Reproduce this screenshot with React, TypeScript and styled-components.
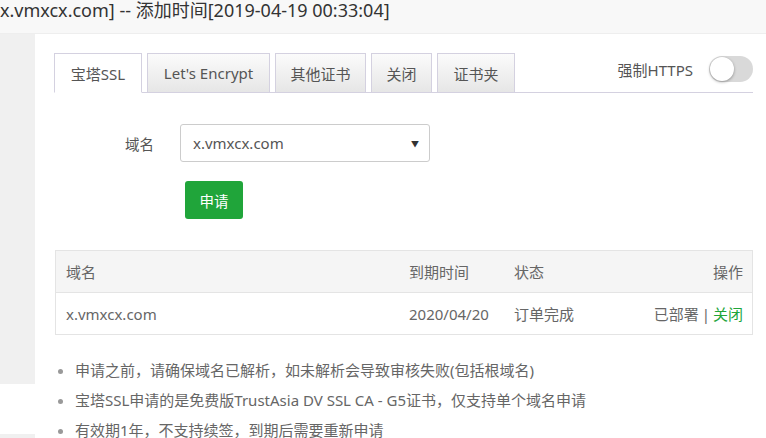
import React from "react";
import styled, { createGlobalStyle } from "styled-components";

const Global = createGlobalStyle`
  html, body { margin: 0; padding: 0; background: #fff; }
  body {
    font-family: "Noto Sans", "Noto Sans CJK SC", "Liberation Sans", sans-serif;
    color: #555;
    overflow: hidden;
  }
  * { box-sizing: border-box; }
`;

const Page = styled.div`
  width: 766px;
  height: 438px;
  display: flex;
  flex-direction: column;
  overflow: hidden;
`;

const TitleBar = styled.div`
  height: 34px;
  flex: none;
  background: #f8f8f8;
  border-bottom: 1px solid #eee;
  font-size: 18px;
  line-height: 20px;
  color: #333;
  white-space: nowrap;
  overflow: hidden;
`;

const Body = styled.div`
  flex: 1;
  display: flex;
  min-height: 0;
`;

const SideRail = styled.div`
  width: 35px;
  flex: none;
  display: flex;
  flex-direction: column;
`;

const RailBlock = styled.div<{ $h: number; $gray: boolean }>`
  height: ${(p) => p.$h}px;
  flex: none;
  background: ${(p) => (p.$gray ? "#f0f0f0" : "#fff")};
`;

const Content = styled.div`
  flex: 1;
  padding: 19px 13px 0 19px;
  display: flex;
  flex-direction: column;
`;

const TabBar = styled.div`
  display: flex;
  align-items: flex-end;
  border-bottom: 1px solid #d4d1e0;
  height: 40px;
`;

const Tab = styled.div<{ $active?: boolean; $w: number }>`
  width: ${(p) => p.$w}px;
  height: 40px;
  margin-right: 5px;
  margin-bottom: -1px;
  display: flex;
  align-items: center;
  justify-content: center;
  font-size: 15px;
  color: #555;
  border: 1px solid #d4d1e0;
  border-bottom-color: ${(p) => (p.$active ? "#fff" : "#d4d1e0")};
  background: ${(p) =>
    p.$active ? "#fff" : "linear-gradient(to bottom, #fbfbfb 0%, #e6e6e6 100%)"};
`;

const ForceHttps = styled.div`
  margin-left: auto;
  align-self: flex-start;
  display: flex;
  align-items: center;
  gap: 16px;
  padding-top: 3px;
`;

const SwitchLabel = styled.span`
  font-size: 15px;
  color: #555;
`;

const Switch = styled.div`
  width: 44px;
  height: 26px;
  border-radius: 13px;
  background: #d9d9d9;
  position: relative;
`;

const Knob = styled.div`
  position: absolute;
  left: 1px;
  top: 1px;
  width: 24px;
  height: 24px;
  border-radius: 50%;
  background: #fff;
  box-shadow: 0 1px 3px rgba(0, 0, 0, 0.35);
`;

const FormRow = styled.div`
  display: flex;
  align-items: center;
  margin-top: 31px;
`;

const FieldLabel = styled.div`
  width: 100px;
  text-align: right;
  font-size: 14.5px;
  color: #555;
  margin-right: 26px;
`;

const Select = styled.div`
  width: 250px;
  height: 38px;
  border: 1px solid #ccc;
  border-radius: 3px;
  display: flex;
  align-items: center;
  justify-content: space-between;
  padding: 0 10px 0 12px;
  font-size: 15px;
  color: #555;
`;

const Caret = styled.span`
  font-size: 8px;
  color: #333;
`;

const ActionRow = styled.div`
  display: flex;
  padding-left: 131px;
  margin-top: 19px;
`;

const GreenButton = styled.button`
  width: 58px;
  height: 38px;
  border: none;
  border-radius: 3px;
  background: #20a53a;
  color: #fff;
  font-family: inherit;
  font-size: 14.5px;
  padding: 0;
`;

const Table = styled.div`
  margin-top: 31px;
  margin-left: 1px;
  border: 1px solid #e4e4e4;
  font-size: 15px;
  color: #666;
`;

const Row = styled.div<{ $head?: boolean }>`
  display: grid;
  grid-template-columns: 343px 105px 1fr auto;
  align-items: center;
  height: ${(p) => (p.$head ? 42 : 41)}px;
  background: ${(p) => (p.$head ? "#f5f5f5" : "#fff")};
  border-bottom: ${(p) => (p.$head ? "1px solid #e4e4e4" : "none")};
  padding: 0 9px 0 10px;
`;

const Cell = styled.div<{ $right?: boolean }>`
  text-align: ${(p) => (p.$right ? "right" : "left")};
  white-space: nowrap;
`;

const Sep = styled.span`
  margin: 0 3px;
  color: #666;
`;

const GreenLink = styled.span`
  color: #20a53a;
`;

const Notes = styled.ul`
  margin: 20px 0 0 0;
  padding: 0 0 0 21px;
  list-style: disc;
  font-size: 15px;
  color: #666;
  li {
    height: 30px;
    line-height: 30px;
    white-space: nowrap;
  }
  li::marker {
    color: #999;
  }
`;

export default function App() {
  return (
    <Page>
      <Global />
      <TitleBar>x.vmxcx.com] -- 添加时间[2019-04-19 00:33:04]</TitleBar>
      <Body>
        <SideRail>
          <RailBlock $h={350} $gray />
          <RailBlock $h={50} $gray={false} />
          <RailBlock $h={20} $gray />
        </SideRail>
        <Content>
          <TabBar>
            <Tab $active $w={88}>宝塔SSL</Tab>
            <Tab $w={123}>Let's Encrypt</Tab>
            <Tab $w={91}>其他证书</Tab>
            <Tab $w={61}>关闭</Tab>
            <Tab $w={78}>证书夹</Tab>
            <ForceHttps>
              <SwitchLabel>强制HTTPS</SwitchLabel>
              <Switch>
                <Knob />
              </Switch>
            </ForceHttps>
          </TabBar>
          <FormRow>
            <FieldLabel>域名</FieldLabel>
            <Select>
              <span>x.vmxcx.com</span>
              <Caret>▼</Caret>
            </Select>
          </FormRow>
          <ActionRow>
            <GreenButton>申请</GreenButton>
          </ActionRow>
          <Table>
            <Row $head>
              <Cell>域名</Cell>
              <Cell>到期时间</Cell>
              <Cell>状态</Cell>
              <Cell $right>操作</Cell>
            </Row>
            <Row>
              <Cell>x.vmxcx.com</Cell>
              <Cell>2020/04/20</Cell>
              <Cell>订单完成</Cell>
              <Cell $right>
                已部署<Sep>|</Sep><GreenLink>关闭</GreenLink>
              </Cell>
            </Row>
          </Table>
          <Notes>
            <li>申请之前，请确保域名已解析，如未解析会导致审核失败(包括根域名)</li>
            <li>宝塔SSL申请的是免费版TrustAsia DV SSL CA - G5证书，仅支持单个域名申请</li>
            <li>有效期1年，不支持续签，到期后需要重新申请</li>
          </Notes>
        </Content>
      </Body>
    </Page>
  );
}
